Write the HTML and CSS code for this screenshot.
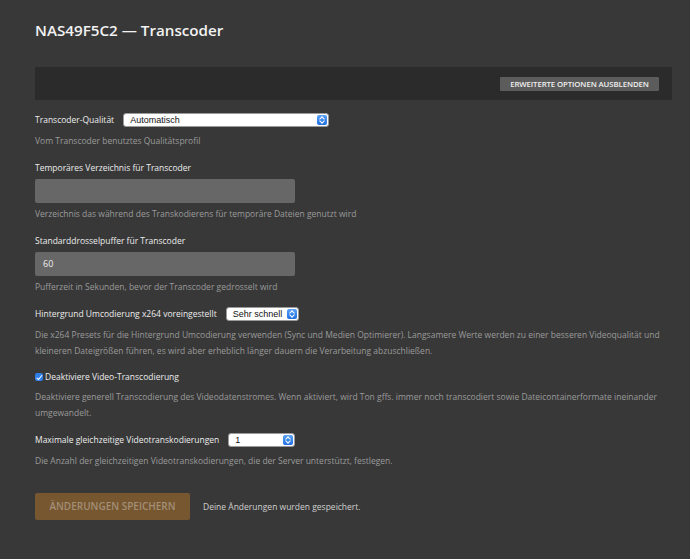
FILE: index.html
```
<!doctype html>
<html>
<head>
<meta charset="utf-8">
<title>NAS49F5C2 — Transcoder</title>
<link rel="stylesheet" href="styles.css">
</head>
<body>
<div class="wrap">
	<h1 class="title">NAS49F5C2 — Transcoder</h1>

	<div class="toolbar">
		<span class="btnSmall">Erweiterte Optionen ausblenden</span>
	</div>

	<div class="row first">
		<span class="label">Transcoder-Qualität</span>
		<span class="select wide">Automatisch<i class="arrow"></i></span>
	</div>
	<p class="help">Vom Transcoder benutztes Qualitätsprofil</p>

	<div class="label block">Temporäres Verzeichnis für Transcoder</div>
	<div class="input"></div>
	<p class="help short">Verzeichnis das während des Transkodierens für temporäre Dateien genutzt wird</p>

	<div class="label block">Standarddrosselpuffer für Transcoder</div>
	<div class="input">60</div>
	<p class="help short">Pufferzeit in Sekunden, bevor der Transcoder gedrosselt wird</p>

	<div class="row">
		<span class="label">Hintergrund Umcodierung x264 voreingestellt</span>
		<span class="select mid">Sehr schnell<i class="arrow"></i></span>
	</div>
	<p class="help">Die x264 Presets für die Hintergrund Umcodierung verwenden (Sync und Medien Optimierer). Langsamere Werte werden zu einer besseren Videoqualität und kleineren Dateigrößen führen, es wird aber erheblich länger dauern die Verarbeitung abzuschließen.</p>

	<div class="label block check"><span class="box"></span>Deaktiviere Video-Transcodierung</div>
	<p class="help tight">Deaktiviere generell Transcodierung des Videodatenstromes. Wenn aktiviert, wird Ton gffs. immer noch transcodiert sowie Dateicontainerformate ineinander umgewandelt.</p>

	<div class="row">
		<span class="label">Maximale gleichzeitige Videotranskodierungen</span>
		<span class="select small">1<i class="arrow"></i></span>
	</div>
	<p class="help">Die Anzahl der gleichzeitigen Videotranskodierungen, die der Server unterstützt, festlegen.</p>

	<div class="save">
		<span class="btnSave">Änderungen speichern</span>
		<span class="saved">Deine Änderungen wurden gespeichert.</span>
	</div>
</div>
</body>
</html>
```

FILE: styles.css
```
html,
body {
	margin: 0;
	height: 100%;
	background: #383838;
	font-family: "Open Sans", "Liberation Sans", sans-serif;
	color: #e6e6e6;
	overflow: hidden;
}
.wrap {
	padding: 0 18px 0 35px;
}
.title {
	margin: 0;
	padding-top: 20px;
	font-size: 15.2px;
	line-height: 20px;
	font-weight: 600;
	color: #f2f2f2;
}
.toolbar {
	display: flex;
	justify-content: flex-end;
	align-items: center;
	margin-top: 27px;
	height: 33px;
	padding-right: 13px;
	background: #2b2b2b;
}
.btnSmall {
	display: inline-block;
	width: 159px;
	height: 14px;
	line-height: 14px;
	text-align: center;
	background: #5c5c5c;
	color: #f0f0f0;
	font-size: 7.8px;
	font-weight: 600;
	letter-spacing: -0.1px;
	text-transform: uppercase;
	border-radius: 1px;
}
.label {
	font-size: 8.5px;
	line-height: 16px;
	color: #ececec;
}
.block {
	display: block;
	margin-top: 11px;
}
.row {
	display: flex;
	align-items: center;
	gap: 9px;
	height: 14px;
	margin-top: 12px;
}
.row.first {
	margin-top: 13px;
}
.help {
	margin: 6px 0 0;
	font-size: 8.5px;
	line-height: 16px;
	color: #9a9a9a;
}
.help.short {
	margin-top: 3px;
}
.help.tight {
	margin-top: 4px;
}
.input {
	margin-top: 3px;
	width: 252px;
	height: 24px;
	line-height: 24px;
	padding-left: 8px;
	background: #676767;
	border-radius: 2px;
	font-size: 9px;
	color: #f0f0f0;
}
.select {
	position: relative;
	display: inline-block;
	box-sizing: border-box;
	height: 14px;
	line-height: 13px;
	padding-left: 6px;
	background: #fff;
	border: 1px solid #9a9a9a;
	border-radius: 3px;
	color: #111;
	font-size: 9px;
	font-family: "Liberation Sans", sans-serif;
}
.select.wide {
	width: 206px;
}
.select.mid {
	width: 73px;
}
.select.small {
	width: 67px;
}
.arrow {
	position: absolute;
	right: 1px;
	top: 1px;
	width: 10px;
	height: 10px;
	border-radius: 2px;
	background: linear-gradient(#5aa2f5, #1f6fe3);
}
.arrow:before,
.arrow:after {
	content: "";
	position: absolute;
	left: 3px;
	width: 3px;
	height: 3px;
	border-left: 1px solid #fff;
	border-top: 1px solid #fff;
}
.arrow:before {
	top: 2px;
	transform: rotate(45deg);
}
.arrow:after {
	top: 4px;
	transform: rotate(225deg);
}
.check {
	display: flex;
	align-items: center;
	gap: 2px;
	margin-top: 10px;
}
.box {
	position: relative;
	width: 8px;
	height: 8px;
	border-radius: 2px;
	background: #2f7ee8;
}
.box:after {
	content: "";
	position: absolute;
	left: 2.5px;
	top: 0.5px;
	width: 2px;
	height: 4.5px;
	border-right: 1.2px solid #fff;
	border-bottom: 1.2px solid #fff;
	transform: rotate(40deg);
}
.save {
	display: flex;
	align-items: center;
	gap: 13px;
	margin-top: 24px;
}
.btnSave {
	display: inline-block;
	width: 155px;
	height: 27px;
	line-height: 27px;
	text-align: center;
	background: #765730;
	color: #a38e76;
	font-size: 10px;
	font-weight: 600;
	text-transform: uppercase;
	border-radius: 2px;
}
.saved {
	font-size: 8.5px;
	color: #cfcfcf;
}
```
